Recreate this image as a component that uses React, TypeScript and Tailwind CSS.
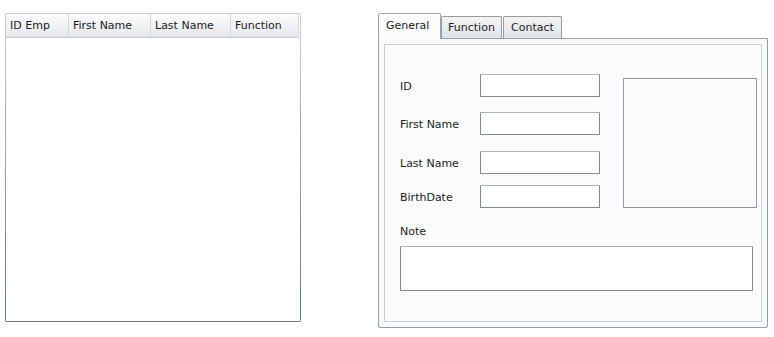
import React from "react";

const font = { fontFamily: '"DejaVu Sans", Verdana, sans-serif' };

function TextBox({ className = "" }: { className?: string }) {
  return (
    <div
      className={
        "border border-[#7f8b97] border-t-[#aab2bb] bg-white rounded-[1px] " + className
      }
    />
  );
}

function FieldRow({ label, mt }: { label: string; mt: string }) {
  return (
    <div className={"flex items-center " + mt}>
      <div className="w-[80px] pt-[1px] text-[11px] leading-[15px] text-[#1b1b1b]">{label}</div>
      <TextBox className="w-[120px] h-[23px]" />
    </div>
  );
}

export default function App() {
  const cols = [
    { name: "ID Emp", w: "w-[63px]" },
    { name: "First Name", w: "w-[82px]" },
    { name: "Last Name", w: "w-[80px]" },
    { name: "Function", w: "w-[68px]" },
  ];
  return (
    <div className="w-[774px] h-[337px] bg-white flex pl-[5px] pt-[13px]" style={font}>
      {/* Grid */}
      <div className="w-[296px] h-[309px] p-px rounded-[2px] bg-linear-to-b from-[#c8cdd3] to-[#667684]">
        <div className="w-full h-full bg-white flex flex-col">
          <div className="flex h-[24px] bg-linear-to-b from-[#fcfcfd] to-[#e4e7eb] border-b border-[#c3c9cf] w-[293px]">
            {cols.map((c) => (
              <div
                key={c.name}
                className={
                  c.w +
                  " h-full border-r border-[#d3d8dd] pl-[4px] pt-[1px] flex items-center text-[11px] text-[#1b1b1b]"
                }
              >
                {c.name}
              </div>
            ))}
          </div>
        </div>
      </div>

      {/* Tab control */}
      <div className="ml-[77px] w-[390px] flex flex-col">
        <div className="flex items-end h-[25px]">
          <div className="relative z-10 w-[63px] h-[26px] -mb-px border border-b-0 border-[#9aa4ae] rounded-t-[2px] bg-[#fcfcfc] pl-[7px] pt-[4px] text-[11px] leading-[15px] text-[#1b1b1b]">
            General
          </div>
          <div className="w-[61px] h-[22px] border border-b-0 border-[#959ba3] rounded-t-[2px] bg-linear-to-b from-[#f4f4f4] to-[#e1e3e5] flex items-center justify-center text-[11px] text-[#1b1b1b] pt-[2px]">
            Function
          </div>
          <div className="ml-px w-[59px] h-[22px] border border-b-0 border-[#959ba3] rounded-t-[2px] bg-linear-to-b from-[#f4f4f4] to-[#e1e3e5] flex items-center justify-center text-[11px] text-[#1b1b1b] pt-[2px]">
            Contact
          </div>
        </div>
        <div className="h-[290px] border border-[#939ea9] rounded-b-[2px] bg-[#f9f9f9] p-[5px]">
          <div className="w-full h-full border border-[#c7d2dc] bg-[#fbfbfb] pl-[15px] pt-[29px]">
            <div className="flex">
              <div className="flex flex-col">
                <FieldRow label="ID" mt="" />
                <FieldRow label="First Name" mt="mt-[15px]" />
                <FieldRow label="Last Name" mt="mt-[16px]" />
                <FieldRow label="BirthDate" mt="mt-[11px]" />
              </div>
              <div className="ml-[23px] mt-[4px] w-[134px] h-[130px] border border-[#8e99a5] bg-[#fbfbfb]" />
            </div>
            <div className="mt-[16px] h-[15px] text-[11px] leading-[15px] text-[#1b1b1b]">Note</div>
            <TextBox className="mt-[7px] w-[353px] h-[45px]" />
          </div>
        </div>
      </div>
    </div>
  );
}
